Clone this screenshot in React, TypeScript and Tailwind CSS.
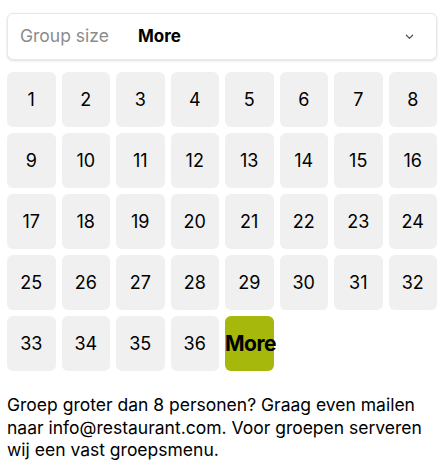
import React, { useState } from 'react'

const sizes = Array.from({ length: 36 }, (_, i) => i + 1)

const Chevron = () => (
  <svg
    className="h-[15px] w-[15px] text-[#555]"
    xmlns="http://www.w3.org/2000/svg"
    fill="none"
    viewBox="0 0 24 24"
    stroke="currentColor"
    aria-hidden="true"
  >
    <path strokeLinecap="round" strokeLinejoin="round" strokeWidth="2" d="M7 10l5 5 5-5" />
  </svg>
)

const App = () => {
  const [selected, setSelected] = useState<number | 'more'>('more')

  return (
    <div className="bg-white px-[7px] pt-[13px] font-['Inter',sans-serif] text-black">
      <button
        type="button"
        className="flex h-[47px] w-full items-center rounded-md border border-gray-200 bg-white pl-[12px] pr-[19px] shadow-sm"
      >
        <span className="w-[118px] text-left text-[17.5px] text-[#8c8c8c]">Group size</span>
        <span className="text-[17px] font-bold">
          {selected === 'more' ? 'More' : selected}
        </span>
        <span className="ml-auto">
          <Chevron />
        </span>
      </button>

      <div className="mt-[12px] grid grid-cols-8 gap-[6px]">
        {sizes.map((n) => (
          <button
            key={n}
            type="button"
            onClick={() => setSelected(n)}
            className="flex h-[55px] items-center justify-center rounded-md bg-[#f0f0f0] text-[18px]"
          >
            {n}
          </button>
        ))}
        <button
          type="button"
          onClick={() => setSelected('more')}
          className="h-[55px] rounded-md bg-[#a5b80b] text-[21px] font-bold leading-[55px] tracking-tight text-black"
        >
          <span className="block w-full whitespace-nowrap text-left">More</span>
        </button>
      </div>

      <p className="mt-[23px] text-[17.5px] leading-[22.5px]">
        Groep groter dan 8 personen? Graag even mailen naar info@restaurant.com. Voor groepen
        serveren wij een vast groepsmenu.
      </p>
    </div>
  )
}

export default App
